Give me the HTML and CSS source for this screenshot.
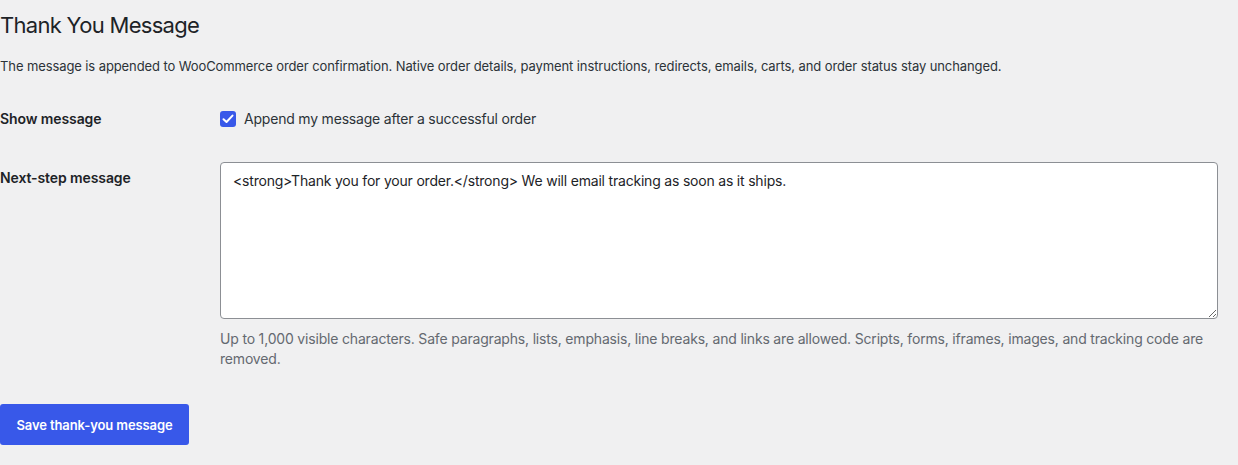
FILE: index.html
```html
<!DOCTYPE html>
<html lang="en">
<head>
    <meta charset="UTF-8">
    <meta name="viewport" content="width=device-width, initial-scale=1.0">
    <title>Thank You Message</title>
    <link rel="stylesheet" href="styles.css">
</head>
<body>

    <div class="wrap">
        <h1 class="page-title">Thank You Message</h1>
        <p class="intro">The message is appended to WooCommerce order confirmation. Native order details, payment instructions, redirects, emails, carts, and order status stay unchanged.</p>

        <form class="settings">
            <!-- Show message row -->
            <div class="row row-check">
                <div class="row-label">Show message</div>
                <div class="row-field">
                    <label class="check">
                        <span class="check-box">
                            <svg width="12" height="10" viewBox="0 0 12 10"><path d="M1.5 5.2 L4.5 8 L10.5 1.6" fill="none" stroke="#fff" stroke-width="2" stroke-linecap="round" stroke-linejoin="round"/></svg>
                        </span>
                        Append my message after a successful order
                    </label>
                </div>
            </div>

            <!-- Message row -->
            <div class="row row-message">
                <div class="row-label">Next-step message</div>
                <div class="row-field">
                    <textarea class="message-box" rows="7">&lt;strong&gt;Thank you for your order.&lt;/strong&gt; We will email tracking as soon as it ships.</textarea>
                    <p class="hint">Up to 1,000 visible characters. Safe paragraphs, lists, emphasis, line breaks, and links are allowed. Scripts, forms, iframes, images, and tracking code are removed.</p>
                </div>
            </div>

            <div class="submit">
                <button type="button" class="save-button">Save thank-you message</button>
            </div>
        </form>
    </div>

</body>
</html>
```

FILE: styles.css
```css
body {
    margin: 0;
    background-color: #f0f0f1;
    font-family: 'Inter', 'Liberation Sans', sans-serif;
    color: #1d2327;
}
.wrap {
    padding: 0 20px 0 0;
}
.page-title {
    font-size: 22px;
    font-weight: 400;
    letter-spacing: -0.7px;
    line-height: 30px;
    margin: 10px 0 0;
    color: #1d2327;
}
.intro {
    font-size: 13px;
    letter-spacing: -0.1px;
    line-height: 20px;
    margin: 16px 0 0;
    color: #2c3338;
}
.settings {
    margin-top: 33px;
}
.row {
    display: grid;
    grid-template-columns: 220px 1fr;
}
.row-label {
    font-size: 14px;
    font-weight: 600;
    letter-spacing: -0.1px;
    line-height: 20px;
}
.check {
    display: flex;
    align-items: center;
    gap: 8px;
    font-size: 14px;
    letter-spacing: -0.2px;
    line-height: 20px;
    color: #2c3338;
}
.check-box {
    width: 16px;
    height: 16px;
    border-radius: 3px;
    background-color: #3858e9;
    display: flex;
    justify-content: center;
    align-items: center;
}
.row-message {
    margin-top: 33px;
}
.row-message .row-label {
    padding-top: 6px;
}
.message-box {
    display: block;
    box-sizing: border-box;
    width: 100%;
    height: 157px;
    margin: 0;
    padding: 8px 12px;
    border: 1px solid #8c8f94;
    border-radius: 4px;
    background-color: #fff;
    font-family: 'Inter', 'Liberation Sans', sans-serif;
    font-size: 14px;
    letter-spacing: -0.2px;
    line-height: 20px;
    color: #1d2327;
    resize: vertical;
}
.hint {
    margin: 10px 0 0;
    font-size: 14px;
    letter-spacing: -0.18px;
    line-height: 20px;
    color: #646970;
}
.submit {
    margin-top: 35px;
}
.save-button {
    width: 189px;
    height: 41px;
    border: 0;
    border-radius: 3px;
    background-color: #3858e9;
    color: #fff;
    font-family: 'Inter', 'Liberation Sans', sans-serif;
    font-size: 13px;
    font-weight: 600;
    letter-spacing: -0.1px;
    cursor: pointer;
}
```
